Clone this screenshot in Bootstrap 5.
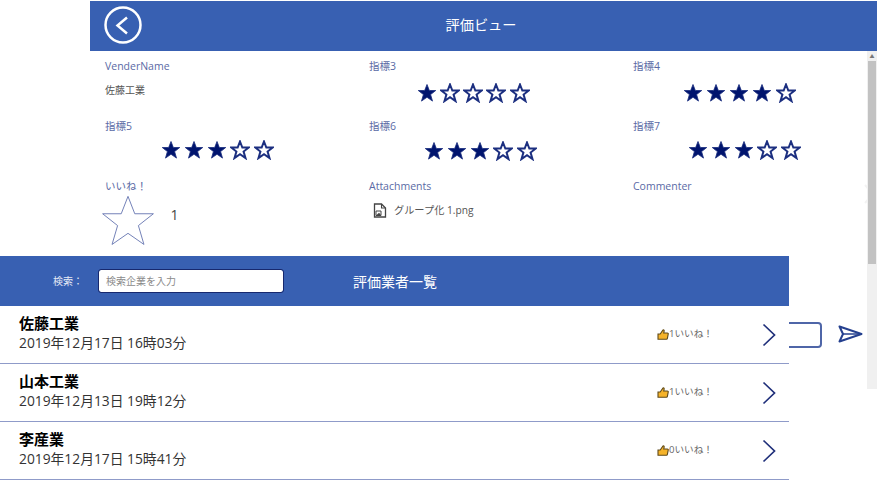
<!DOCTYPE html>
<html lang="ja">
<head>
  <meta charset="UTF-8">
  <meta name="viewport" content="width=device-width, initial-scale=1">
  <title>評価ビュー</title>
  <link href="https://cdn.jsdelivr.net/npm/bootstrap@5.3.0/dist/css/bootstrap.min.css" rel="stylesheet">
  <style>
    html, body { height: 100%; overflow: hidden; }
    body {
      position: relative;
      background: #fff;
      font-family: "Open Sans", "Noto Sans CJK JP", sans-serif;
    }
    .view-panel { margin: 1px 2px 0 90px; }
    .view-head {
      height: 50px;
      padding: 0 5px 3px 0;
      background: #3860b2;
      color: #fff;
      font-size: 14.2px;
    }
    .back-btn { left: 14px; top: 5px; }
    .view-body { height: 338px; }
    .form-area {
      flex: 1;
      display: grid;
      grid-template-columns: 264px 264px 1fr;
      grid-auto-rows: 60px;
      align-content: start;
      padding-top: 6px;
    }
    .form-cell { padding-left: 15px; }
    .field-label { font-size: 10.5px; line-height: 18px; color: #5a6aa5; }
    .field-value { font-size: 10px; color: #555; }
    .vendor-name { margin-top: 7px; line-height: 16px; }
    .star-row { display: flex; gap: 3.300px; margin-top: var(--star-top); }
    .big-star { margin-left: -6.500px; margin-top: -3px; }
    .like-count { font-size: 14px; color: #444; margin: 0 0 16px 14px; }
    .file-row { margin: 8px 0 0 4px; font-size: 10.200px; color: #555; gap: 7px; }
    .side-scroll { width: 10px; background: #f0f0f0; }
    .side-scroll-top { height: 10px; color: #777; font-size: 5px; line-height: 10px; text-align: center; }
    .side-scroll-thumb { height: 203px; background: #c2c2c2; margin: 0 1px; }
    .faint-arrow { left: 863px; top: 184px; z-index: -1; }
    .send-box {
      left: 780px; top: 322px; width: 42px; height: 26px;
      border: 2px solid #4f66a8; border-radius: 4px;
    }
    .send-icon { left: 838px; top: 324px; }
    .list-panel {
      left: 0; top: 256px; width: 789px;
      background: #fff;
    }
    .list-head {
      height: 50px;
      background: #3860b2;
      color: #fff;
    }
    .search-label { width: 98px; padding-left: 53px; font-size: 10px; color: #e6eaf5; }
    .search-box {
      width: 186px; height: 24px;
      padding: 0 7px;
      font-size: 10px;
      border: 1.500px solid #17286e;
      border-radius: 3px;
      box-shadow: none;
    }
    .search-box::placeholder { color: #8a8a8a; opacity: 1; }
    .list-title { margin-left: 69px; font-size: 14px; }
    .vendor-row {
      height: 58px;
      padding-left: 19px;
      border-bottom: 1px solid #8f9bc9;
    }
    .vendor-title { font-size: 15px; line-height: 21px; font-weight: 700; color: #000; padding-top: 7px; }
    .vendor-date { font-size: 13.800px; line-height: 19px; margin-top: -1px; color: #333; }
    .like-note { font-size: 9.600px; color: #666; width: 105px; }
    .row-arrow { margin-right: 13px; }
  </style>
</head>
<body>

<svg width="0" height="0" class="position-absolute">
  <symbol id="star" viewBox="0 0 24 24">
    <path d="M12 1.800 14.800 9h7.700l-6.200 4.900 2.300 7.800L12 17.100l-6.600 4.600 2.300-7.800L1.500 9h7.700z"/>
  </symbol>
  <symbol id="thumb" viewBox="0 0 12 11">
    <path d="M1 5h2.200L6 .9c.9-.3 1.400.4 1.100 1.400L6.700 4h3.600c.8 0 1.100.6.900 1.200l-.8 4.100c-.1.6-.5.9-1 .9H1z" fill="#f5b32a" stroke="#5f4a1a" stroke-width="1.100"/>
  </symbol>
  <symbol id="arrow" viewBox="0 0 14 24">
    <path d="M1.500 1.500 12.500 12 1.500 22.500" fill="none" stroke="#1f2f7a" stroke-width="1.700"/>
  </symbol>
</svg>

<!-- 評価ビュー -->
<div class="view-panel">
  <div class="view-head position-relative d-flex align-items-center justify-content-center">
    <svg class="back-btn position-absolute" width="38" height="38" viewBox="0 0 38 38">
      <circle cx="19" cy="19" r="17.500" fill="none" stroke="#fff" stroke-width="2.500"/>
      <path d="M23 11.500 13.500 19.500 23 27.500" fill="none" stroke="#fff" stroke-width="2.500"/>
    </svg>
    <span>評価ビュー</span>
  </div>
  <div class="view-body d-flex">
    <div class="form-area">
      <div class="form-cell">
        <div class="field-label">VenderName</div>
        <div class="field-value vendor-name">佐藤工業</div>
      </div>
      <div class="form-cell">
        <div class="field-label">指標3</div>
        <div class="star-row" data-score="1" data-left="47.500" data-top="7.500"></div>
      </div>
      <div class="form-cell">
        <div class="field-label">指標4</div>
        <div class="star-row" data-score="4" data-left="49.500" data-top="7.500"></div>
      </div>
      <div class="form-cell">
        <div class="field-label">指標5</div>
        <div class="star-row" data-score="3" data-left="55.500" data-top="4.500"></div>
      </div>
      <div class="form-cell">
        <div class="field-label">指標6</div>
        <div class="star-row" data-score="3" data-left="54.500" data-top="5.500"></div>
      </div>
      <div class="form-cell">
        <div class="field-label">指標7</div>
        <div class="star-row" data-score="3" data-left="54.500" data-top="4.500"></div>
      </div>
      <div class="form-cell">
        <div class="field-label">いいね！</div>
        <div class="d-flex align-items-center">
          <svg width="58" height="58" viewBox="0 0 24 24" class="big-star flex-shrink-0">
            <use href="#star" fill="#fff" stroke="#6f7db5" stroke-width=".4"/>
          </svg>
          <span class="like-count">1</span>
        </div>
      </div>
      <div class="form-cell">
        <div class="field-label">Attachments</div>
        <div class="file-row d-flex align-items-center">
          <svg width="14" height="15" viewBox="0 0 14 15">
            <path d="M1.500 1h7l4 4v9h-11z" fill="#fff" stroke="#444" stroke-width="1.300"/>
            <path d="M8.500 1v4h4" fill="none" stroke="#444" stroke-width="1.100"/>
            <path d="M3 8h5v4.500H3z" fill="#fff" stroke="#444"/>
            <path d="M3.500 12 6 9.800 8 12z" fill="#444"/>
          </svg>
          <span>グループ化 1.png</span>
        </div>
      </div>
      <div class="form-cell">
        <div class="field-label">Commenter</div>
      </div>
    </div>
    <div class="side-scroll">
      <div class="side-scroll-top">▲</div>
      <div class="side-scroll-thumb"></div>
    </div>
  </div>
</div>

<svg class="faint-arrow position-absolute" width="12" height="20" viewBox="0 0 12 20">
  <path d="M2 1 10 10 2 19" fill="none" stroke="#f3f3f3" stroke-width="2"/>
</svg>

<!-- リストの裏に見える入力欄 -->
<div class="send-box position-absolute"></div>
<svg class="send-icon position-absolute" width="25" height="20" viewBox="0 0 25 20">
  <path d="M1.500 2.500 23.500 10 1.500 17.500 5 10z" fill="#fff" stroke="#25408f" stroke-width="2" stroke-linejoin="round"/>
  <path d="M5 10h18.500" stroke="#25408f" stroke-width="1.500"/>
</svg>

<!-- 評価業者一覧 -->
<div class="list-panel position-absolute">
  <div class="list-head d-flex align-items-center">
    <div class="search-label">検索：</div>
    <input class="search-box form-control" type="text" placeholder="検索企業を入力">
    <div class="list-title">評価業者一覧</div>
  </div>
  <div id="vendorList"></div>
</div>

<script>
  const vendors = [
    {name:'佐藤工業', date:'2019年12月17日 16時03分', likes:1},
    {name:'山本工業', date:'2019年12月13日 19時12分', likes:1},
    {name:'李産業', date:'2019年12月17日 15時41分', likes:0}
  ]

  document.querySelector('#vendorList').innerHTML = vendors.map(v => `
    <div class="vendor-row d-flex align-items-center">
      <div class="flex-grow-1 align-self-start">
        <div class="vendor-title">${v.name}</div>
        <div class="vendor-date">${v.date}</div>
      </div>
      <div class="like-note d-flex align-items-center">
        <svg width="12" height="11"><use href="#thumb"/></svg><span>${v.likes}いいね！</span>
      </div>
      <svg class="row-arrow" width="14" height="24"><use href="#arrow"/></svg>
    </div>`).join('')

  // 星を評価の数だけ塗る
  document.querySelectorAll('.star-row').forEach(el => {
    const score = Number(el.dataset.score)
    el.style.marginLeft = el.dataset.left + 'px'
    el.style.setProperty('--star-top', el.dataset.top + 'px')
    el.innerHTML = [1,2,3,4,5].map(n => `
      <svg width="20" height="20" viewBox="0 0 24 24">
        <use href="#star" fill="${n <= score ? '#00146e' : '#fff'}" stroke="#1c2f80" stroke-width="${n <= score ? 1 : 2.4}"/>
      </svg>`).join('')
  })
</script>

<script src="https://cdn.jsdelivr.net/npm/bootstrap@5.3.0/dist/js/bootstrap.bundle.min.js"></script>
</body>
</html>
